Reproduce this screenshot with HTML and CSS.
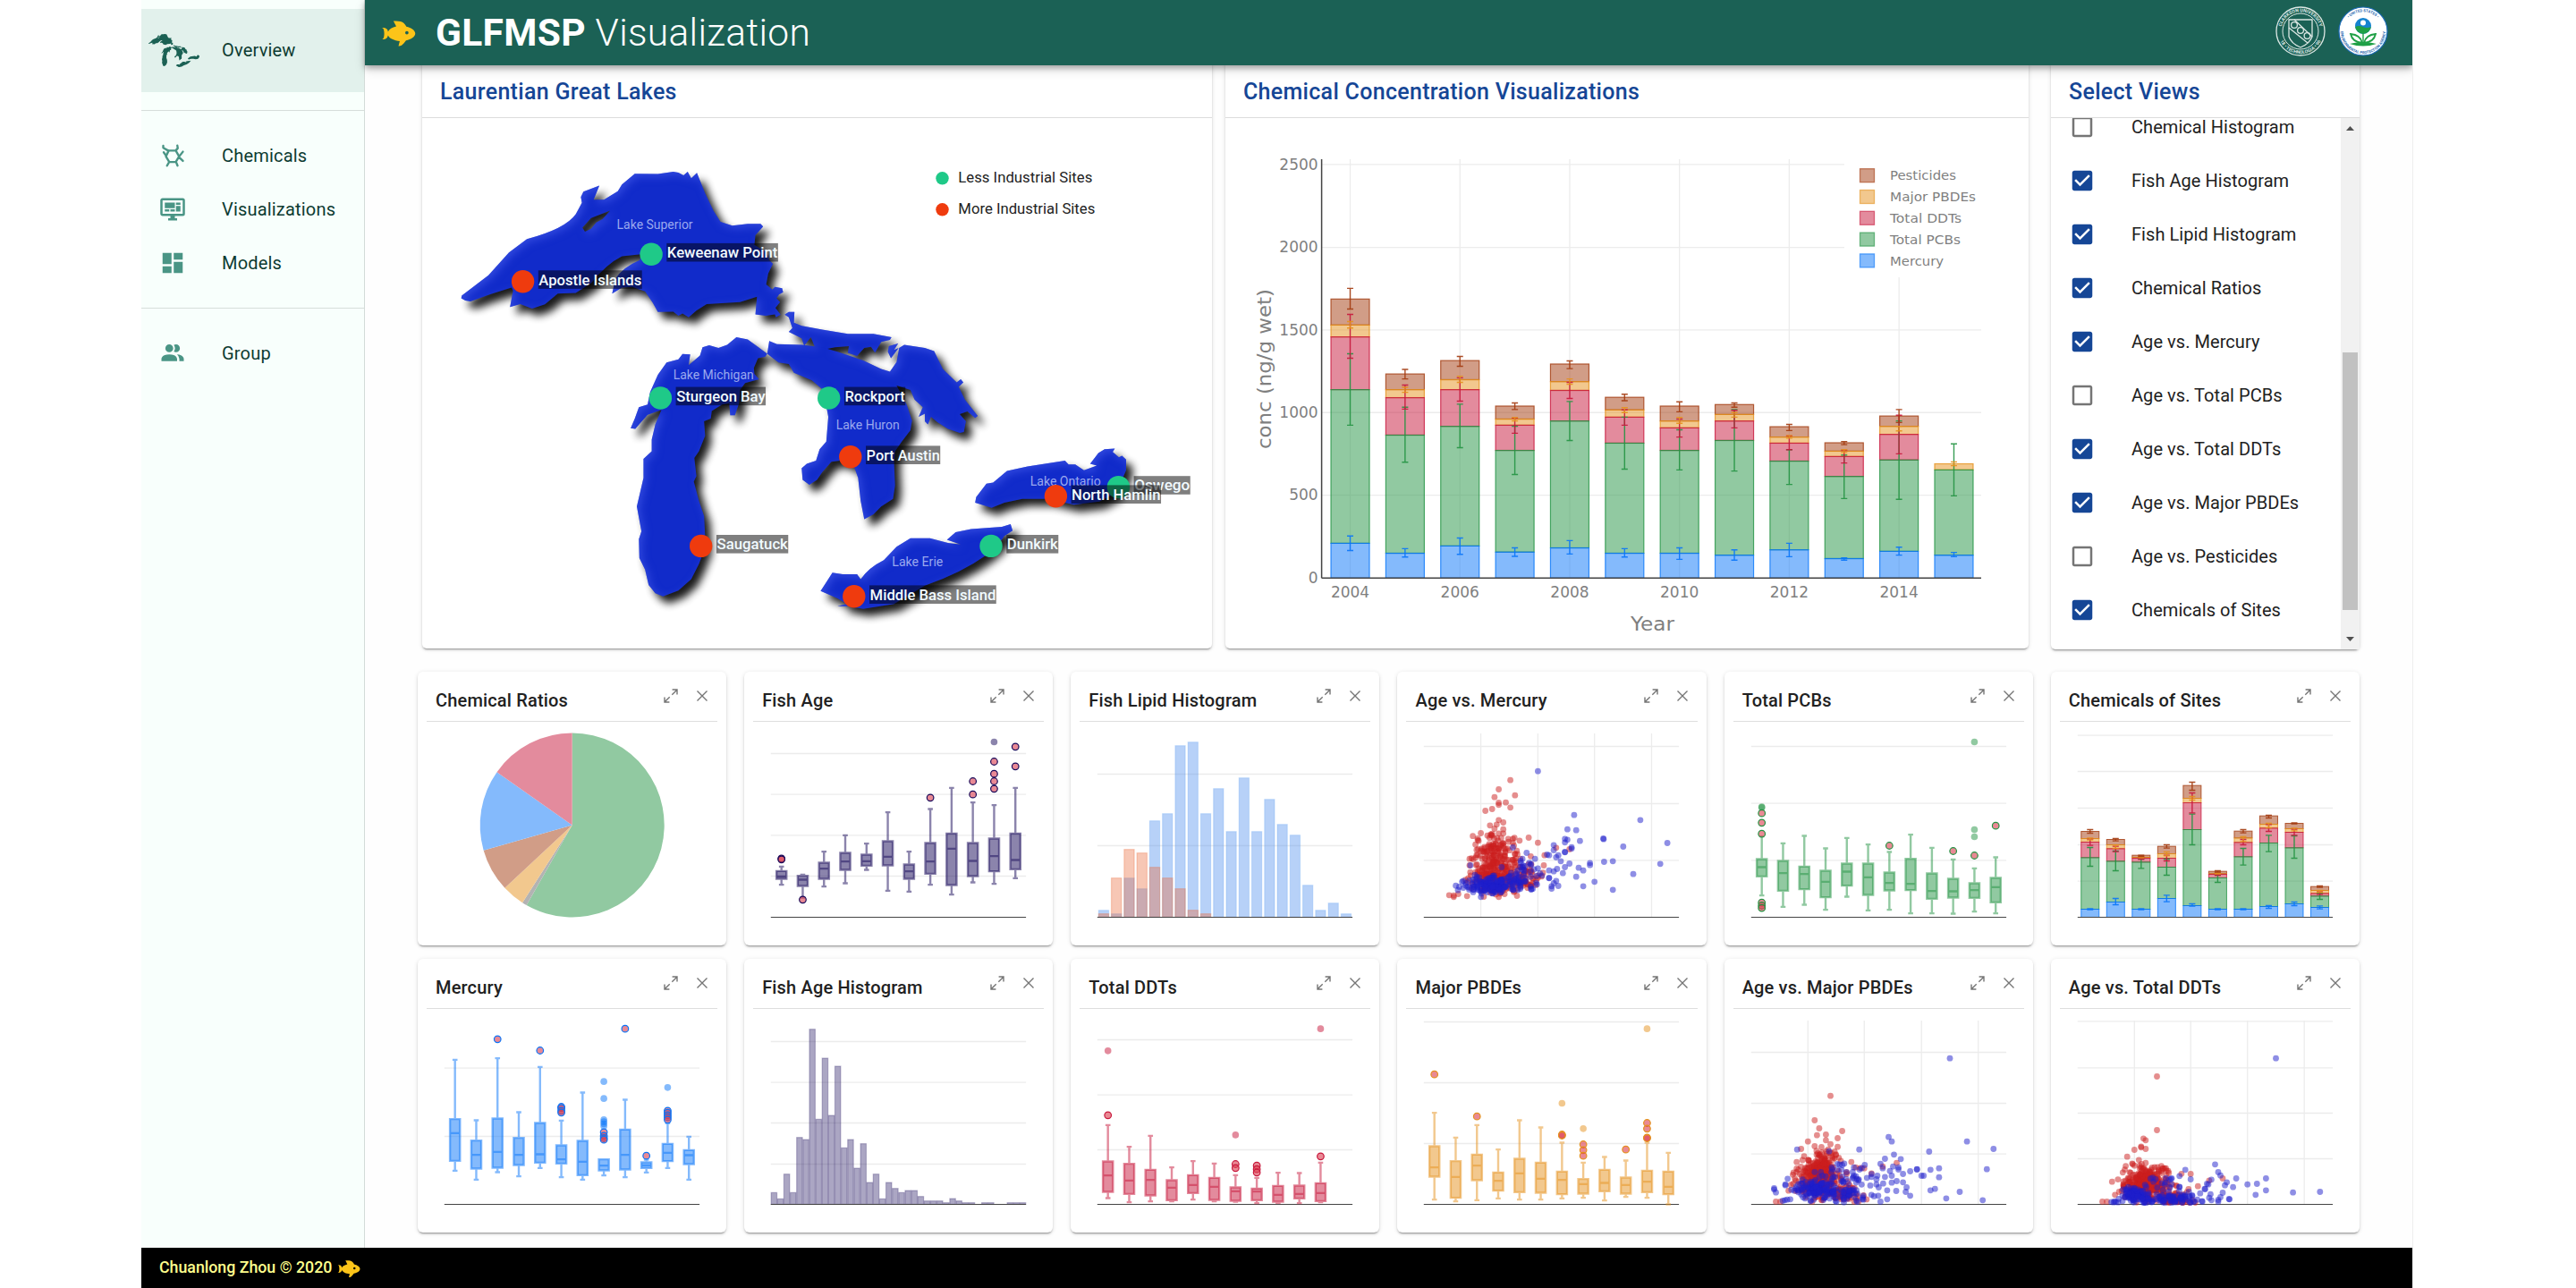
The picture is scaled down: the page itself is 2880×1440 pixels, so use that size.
FILE: index.html
```html
<!DOCTYPE html>
<html lang="en">
<head>
<meta charset="utf-8">
<title>GLFMSP Visualization</title>
<link rel="stylesheet" href="styles.css">
</head>
<body>
<svg class="defs" width="0" height="0" aria-hidden="true">
  <defs>
    <symbol id="fish" viewBox="0 0 24 24"><path d="M12,20L12.76,17C9.5,16.79 6.59,15.4 5.75,13.58C5.66,14.06 5.53,14.5 5.33,14.83C4.67,16 3.33,16 2,16C3.1,16 3.5,14.43 3.5,12.5C3.5,10.57 3.1,9 2,9C3.33,9 4.67,9 5.33,10.17C5.53,10.5 5.66,10.94 5.75,11.42C6.4,10 8.32,8.85 10.66,8.32L9,5C11,5 13,5 14.33,5.67C15.46,6.23 16.11,7.27 16.69,8.38C19.61,9.08 22,10.66 22,12.5C22,14.38 19.5,16 16.5,16.66C15.67,17.76 14.86,18.78 14.17,19.33C13.33,20 12.67,20 12,20M17,11A1,1 0 0,0 16,12A1,1 0 0,0 17,13A1,1 0 0,0 18,12A1,1 0 0,0 17,11Z"/></symbol>
    <symbol id="checked" viewBox="0 0 24 24"><path d="M19 3H5c-1.11 0-2 .9-2 2v14c0 1.1.89 2 2 2h14c1.11 0 2-.9 2-2V5c0-1.1-.89-2-2-2zm-9 14l-5-5 1.41-1.41L10 14.17l7.59-7.59L19 8l-9 9z"/></symbol>
    <symbol id="unchecked" viewBox="0 0 24 24"><path d="M19 5v14H5V5h14m0-2H5c-1.1 0-2 .9-2 2v14c0 1.1.9 2 2 2h14c1.1 0 2-.9 2-2V5c0-1.1-.9-2-2-2z"/></symbol>
    <symbol id="expand" viewBox="0 0 16 16"><path d="M9.3 6.7 14.6 1.4M9.6 1h5.4v5.4M6.7 9.3 1.4 14.6M1 9.6V15h5.4" fill="none" stroke="#757575" stroke-width="1.4"/></symbol>
    <symbol id="close" viewBox="0 0 16 16"><path d="M2.5 2.5l11 11M13.5 2.5l-11 11" fill="none" stroke="#757575" stroke-width="1.4"/></symbol>
    <g id="lakes">
      <path fill-rule="evenodd" d="M98,633L97,640 105,646 115,648Q155,628 195,612L198,620 192,663 212,655 235,667 260,656 285,628 320,626 350,600Q380,550 410,530L447,525 445,540Q410,560 397,590L391,628 410,612 430,610 455,622 470,652 480,676 510,675 520,686 528,680 540,690 555,672 575,655 640,650 673,636 670,682 690,686 708,682 710,690 719,683 709,665 718,650 711,640 716,630 724,624 722,614 708,610 703,617 691,604 695,575 704,550 697,540 692,520 668,500 670,475 685,452 680,445 655,445 625,450 602,440 588,410 572,365 556,312 545,326 538,309 530,318 520,311 510,309 480,315 435,314 410,342 402,360 375,382 355,382 366,345 335,361 330,375 332,390 320,420Q300,458 225,485L190,520 150,580ZM387,411L350,430 333,455 338,466 350,458 360,442 372,433Z"/>
      <path d="M727,683L735,676 746,676 745,704 760,712 800,722 850,733 900,733 935,742 932,749 915,754 903,782 895,767 882,770 868,791 850,783 852,765 825,768 800,775 785,765 778,742 765,764 760,745 735,728 742,718 735,690Z"/>
      <path d="M693,785L697,752 712,760 760,762 800,768 830,780 880,803 915,825 932,832 945,807 950,770 960,762 1000,770 1018,778 1035,825 1062,860 1070,852 1075,860 1066,872 1078,905 1103,948 1098,953 1083,936 1068,943 1080,962 1076,990 1068,992 1045,982 1025,965 1012,950 1006,970 1000,962 1000,942 988,950 996,925 980,905 972,880 945,868 965,920 975,960 972,985 955,1015 942,1040 940,1070 942,1130 938,1165 915,1185 900,1205 882,1218 875,1170 870,1110 862,1080 835,1065 818,1068 800,1095 790,1115 775,1128 762,1115 760,1085 770,1073 788,1065 795,1035 808,1015 812,950 805,900 802,880 780,855 745,835 735,812 715,808Z"/>
      <path d="M930,765L948,758 940,775 949,770 934,797 928,780Z"/>
      <path d="M633,742L655,748 676,768 693,785 689,793 675,797 667,822 668,838 677,852 650,862 640,880 638,915 630,946 621,946 619,915 605,918 585,935 583,955 570,962 572,1000 560,1040 551,1058 555,1105 550,1120 560,1170 570,1210 573,1290 560,1335 545,1375 520,1405 490,1420 475,1412 462,1390 455,1350 444,1320 443,1270 448,1250 439,1185 452,1110 452,1060 468,1040 468,1010 475,970 487,932 460,945 445,968 436,982 427,980 435,955 443,925 460,918 465,885 480,840 497,808 520,800 528,786 543,787 540,815 562,790 567,768 580,763 598,770 615,762Z"/>
      <path d="M797,1406L820,1358 840,1362 868,1362 875,1375Q890,1345 920,1325L945,1290 972,1268 1010,1268 1045,1280 1070,1284 1043,1272 1060,1252 1090,1244 1150,1238 1167,1231 1171,1248 1155,1262 1140,1290 1120,1312Q1070,1360 1000,1392L940,1440 880,1453 850,1446 830,1446 848,1440 830,1425Z"/>
      <path d="M1098,1175L1100,1160 1120,1125 1133,1122 1160,1092 1200,1080 1273,1065 1280,1075 1293,1075 1310,1090 1335,1078 1322,1073 1338,1045 1350,1035 1370,1033 1366,1042 1378,1056 1384,1052 1392,1062 1392,1090 1385,1112 1370,1150 1340,1172 1290,1180 1240,1165 1190,1165 1155,1175 1130,1188Z"/>
    </g>
    <filter id="relief" x="-5%" y="-5%" width="115%" height="115%" color-interpolation-filters="sRGB">
      <feGaussianBlur in="SourceAlpha" stdDeviation="5" result="soft"/>
      <feOffset in="soft" dx="7" dy="8" result="shift"/>
      <feComponentTransfer in="shift" result="shadow"><feFuncA type="linear" slope="0.9"/></feComponentTransfer>
      <feOffset in="soft" dx="3" dy="3" result="inner"/>
      <feFlood flood-color="#4d62f0" flood-opacity="0.55"/>
      <feComposite operator="out" in2="inner"/>
      <feComposite operator="in" in2="SourceAlpha" result="light"/>
      <feMerge><feMergeNode in="shadow"/><feMergeNode in="SourceGraphic"/><feMergeNode in="light"/></feMerge>
    </filter>
  </defs>
</svg>

<div class="page">
  <div class="body">
    <nav class="sidebar">
      <a class="nav-item nav-overview">
        <svg class="nav-logo" viewBox="97 308 1296 1146" preserveAspectRatio="none"><use href="#lakes"/></svg>
        <span>Overview</span>
      </a>
      <div class="nav-group nav-main">
        <a class="nav-item"><svg class="nav-icon" viewBox="0 0 24 24"><path d="M8.5 7.5h6.3l3 5.2-3 5H9l-3-5zM8 7.5 3.6 5V3.2M14.8 7.5l1.8-2.2-.4-2.4M18 12.5l3.2-4M6.3 12.3 4 9M9 17.5 7 21M15 17.5l1.4 3.5M17.8 13.5l3.4 3.2" fill="none" stroke="#4a9585" stroke-width="1.9" stroke-linecap="round" stroke-linejoin="round"/></svg><span>Chemicals</span></a>
        <a class="nav-item"><svg class="nav-icon" viewBox="0 0 24 24"><path d="M21,16V4H3V16H21M21,2A2,2 0 0,1 23,4V16A2,2 0 0,1 21,18H14V20H16V22H8V20H10V18H3C1.89,18 1,17.1 1,16V4C1,2.89 1.89,2 3,2H21M5,6H14V11H5V6M15,6H19V8H15V6M19,9V14H15V9H19M5,12H9V14H5V12M10,12H14V14H10V12Z"/></svg><span>Visualizations</span></a>
        <a class="nav-item"><svg class="nav-icon" viewBox="0 0 24 24"><path d="M3 13h8V3H3v10zm0 8h8v-6H3v6zm10 0h8V11h-8v10zm0-18v6h8V3h-8z"/></svg><span>Models</span></a>
      </div>
      <div class="nav-group nav-more">
        <a class="nav-item"><svg class="nav-icon" viewBox="0 0 24 24"><path d="M16 17V19H2V17S2 13 9 13 16 17 16 17M12.5 7.5A3.5 3.5 0 1 0 9 11A3.5 3.5 0 0 0 12.5 7.5M15.94 13A5.32 5.32 0 0 1 18 17V19H22V17S22 13.37 15.94 13M15 4A3.39 3.39 0 0 0 13.07 4.59A5 5 0 0 1 13.07 10.41A3.39 3.39 0 0 0 15 11A3.5 3.5 0 0 0 15 4Z"/></svg><span>Group</span></a>
      </div>
    </nav>

    <div class="main">
      <header class="appbar">
        <svg class="appbar-fish"><use href="#fish"/></svg>
        <h1 class="appbar-title"><b>GLFMSP</b> Visualization</h1>
        <svg class="seal" viewBox="0 0 56 56">
          <defs><path id="ring-top" d="M6.2 28a21.8 21.8 0 0 1 43.6 0"/><path id="ring-bottom" d="M2.8 28a25.2 25.2 0 0 0 50.4 0"/></defs>
          <g fill="none" stroke="#dbe7e4" stroke-width="1.3">
            <circle cx="28" cy="28" r="27"/><circle cx="28" cy="28" r="20" stroke-width="1"/>
            <path d="M15 15h26v19q-3 8-13 12-10-4-13-12z"/><path d="M21 15l20 19M15 24l21 17"/>
            <circle cx="21" cy="21" r="3.4"/><circle cx="28" cy="27" r="3.4"/><circle cx="35.5" cy="33" r="3.4"/>
          </g>
          <text class="seal-text seal-light"><textPath href="#ring-top" startOffset="50%">CLARKSON UNIVERSITY</textPath></text>
          <text class="seal-text seal-light"><textPath href="#ring-bottom" startOffset="50%">18 • TECHNOLOGIA • 96</textPath></text>
        </svg>
        <svg class="seal" viewBox="0 0 56 56">
          <circle cx="28" cy="28" r="27" fill="#fff" stroke="#1c6bb8" stroke-width="1.2"/>
          <circle cx="28" cy="22" r="9" fill="#1583cf"/><circle cx="28" cy="18.5" r="3" fill="#fff"/>
          <path d="M19.1 23q4-1.8 8.5 0t9.3 0a9 9 0 0 1-17.8 0z" fill="#1fa046"/>
          <path d="M27.3 30h1.4v13h-1.4z" fill="#1fa046"/>
          <path d="M27 41q-2-9-13-10 2 9 13 10zM29 41q2-9 13-10-2 9-13 10z" fill="#fff" stroke="#1fa046" stroke-width="1.8"/>
          <path d="M13 42q15-4 30 0-15 5-30 0z" fill="#1fa046"/>
          <text class="seal-text seal-blue"><textPath href="#ring-top" startOffset="50%">• UNITED STATES •</textPath></text>
          <text class="seal-text seal-blue"><textPath href="#ring-bottom" startOffset="50%">ENVIRONMENTAL PROTECTION AGENCY</textPath></text>
        </svg>
      </header>

      <div class="content">
        <div class="panels">
          <section class="panel">
            <h2 class="panel-head">Laurentian Great Lakes</h2>
            <svg class="panel-chart" id="map"></svg>
          </section>
          <section class="panel">
            <h2 class="panel-head">Chemical Concentration Visualizations</h2>
            <svg class="panel-chart" id="concentration"></svg>
          </section>
          <section class="panel panel-views">
            <h2 class="panel-head">Select Views</h2>
            <div class="views">
              <ul class="views-list">
                <li><svg class="box"><use href="#unchecked"/></svg>Chemical Histogram</li>
                <li><svg class="box on"><use href="#checked"/></svg>Fish Age Histogram</li>
                <li><svg class="box on"><use href="#checked"/></svg>Fish Lipid Histogram</li>
                <li><svg class="box on"><use href="#checked"/></svg>Chemical Ratios</li>
                <li><svg class="box on"><use href="#checked"/></svg>Age vs. Mercury</li>
                <li><svg class="box"><use href="#unchecked"/></svg>Age vs. Total PCBs</li>
                <li><svg class="box on"><use href="#checked"/></svg>Age vs. Total DDTs</li>
                <li><svg class="box on"><use href="#checked"/></svg>Age vs. Major PBDEs</li>
                <li><svg class="box"><use href="#unchecked"/></svg>Age vs. Pesticides</li>
                <li><svg class="box on"><use href="#checked"/></svg>Chemicals of Sites</li>
              </ul>
              <div class="scrollbar">
                <svg class="scroll-arrow" viewBox="0 0 9 5"><path d="M0 5 4.5 0 9 5z"/></svg>
                <div class="scroll-thumb"></div>
                <svg class="scroll-arrow" viewBox="0 0 9 5"><path d="M0 0 4.5 5 9 0z"/></svg>
              </div>
            </div>
          </section>
        </div>
        <div class="cards" id="cards"></div>
      </div>
    </div>
  </div>
  <footer class="footer"><span>Chuanlong Zhou © 2020</span><svg class="footer-fish"><use href="#fish"/></svg></footer>
</div>
<script src="charts.js"></script>
</body>
</html>
```
FILE: styles.css
```css
* { box-sizing: border-box; }
body {
  margin: 0;
  background: #fff;
  font-family: Roboto, "Liberation Sans", sans-serif;
  color: #212121;
}
.defs { position: absolute; }
.page {
  width: 2540px;
  height: 1440px;
  margin-left: 158px;
  display: flex;
  flex-direction: column;
  overflow: hidden;
  border-right: 1px solid #eee;
}
.body { flex: 1; display: flex; min-height: 0; }

.sidebar {
  width: 250px;
  padding-top: 10px;
  background: #f8fffc;
  border-right: 1px solid #d3dbd8;
}
.nav-item {
  display: flex;
  align-items: center;
  height: 60px;
  padding-left: 20px;
  font-size: 20px;
  letter-spacing: 0.00938em;
  color: #0d3b31;
}
.nav-overview { height: 93px; padding: 0 0 1px 8px; background: #e2f1ec; }
.nav-logo { width: 57px; height: 37px; margin-right: 25px; fill: #1b6154; }
.nav-icon { width: 30px; height: 30px; margin-right: 40px; fill: #4a9585; }
.nav-group { border-top: 1px solid #d7dedb; }
.nav-main { margin-top: 20px; height: 221px; padding-top: 20px; }
.nav-more { padding-top: 20px; }

.main { flex: 1; display: flex; flex-direction: column; min-width: 0; }
.appbar {
  height: 73px;
  flex: none;
  display: flex;
  align-items: center;
  padding: 0 27px 3px 15px;
  background: #1b6155;
  box-shadow: 0 3px 6px rgba(0,0,0,.28), 0 5px 12px rgba(0,0,0,.14);
  z-index: 2;
  color: #fff;
}
.appbar-fish { width: 45px; height: 45px; margin-top: 3px; fill: #fcc419; }
.appbar-title {
  flex: 1;
  margin: 0 0 0 19px;
  padding-top: 4px;
  font-size: 42.5px;
  line-height: 1;
  font-weight: 300;
  letter-spacing: 0.00735em;
}
.appbar-title b { font-weight: 700; }
.seal { width: 56px; height: 56px; margin-left: 14px; }
.seal-text { font-size: 5.2px; font-weight: 700; text-anchor: middle; }
.seal-light { fill: #dbe7e4; }
.seal-blue { fill: #2868b0; font-size: 4.2px; }

.content { padding: 0 59px; background: #fefefe; flex: 1; min-height: 0; }
.panels {
  display: grid;
  grid-template-columns: 883px 898px 345px;
  column-gap: 15px;
  margin-top: -2px;
  padding-left: 5px;
  height: 655px;
}
.panel {
  display: flex;
  flex-direction: column;
  height: 654px;
  min-width: 0;
  background: #fff;
  border-radius: 0 0 5px 5px;
  box-shadow: 0 3px 1px -2px rgba(0,0,0,.2), 0 2px 2px rgba(0,0,0,.14), 0 1px 5px rgba(0,0,0,.12);
}
.panel-views { margin-left: 10px; width: 345px; height: 655px; }
.panel-head {
  flex: none;
  height: 61px;
  margin: 0;
  padding-left: 20px;
  border-bottom: 1px solid #dcdcdc;
  font-size: 25px;
  line-height: 63px;
  font-weight: 500;
  letter-spacing: 0.3px;
  color: #154696;
}
.panel-chart { width: 100%; height: 593px; display: block; }

.views { flex: 1; display: flex; overflow: hidden; min-height: 0; }
.views-list { flex: 1; list-style: none; margin: -20px 0 0; padding: 0 0 0 20px; }
.views-list li {
  display: flex;
  align-items: center;
  height: 60px;
  font-size: 20px;
  letter-spacing: 0.05px;
}
.box { width: 30px; height: 30px; margin-right: 40px; fill: #757575; }
.box.on { fill: #154696; }
.scrollbar {
  width: 21px;
  display: flex;
  flex-direction: column;
  align-items: center;
  padding: 9px 0;
  background: #f1f1f1;
}
.scroll-arrow { width: 9px; height: 5px; flex: none; fill: #505050; }
.scroll-thumb { width: 17px; height: 288px; margin: 248px 0 auto; background: #c1c1c1; }

.cards {
  display: grid;
  grid-template-columns: repeat(6, 1fr);
  gap: 15px 20px;
  margin-top: 25px;
}
.card {
  height: 306px;
  min-width: 0;
  background: #fff;
  border-radius: 6px;
  box-shadow: 0 3px 1px -2px rgba(0,0,0,.2), 0 2px 2px rgba(0,0,0,.14), 0 1px 5px rgba(0,0,0,.12);
}
.card-head {
  display: flex;
  height: 56px;
  margin: 0 10px;
  padding: 20px 9px 0 10px;
  border-bottom: 1px solid #dedede;
}
.card-head h3 {
  flex: 1;
  margin: 0;
  font-size: 20px;
  line-height: 24px;
  font-weight: 500;
  letter-spacing: 0.0085em;
}
.card-icon { width: 16px; height: 16px; margin: -1px 0 0 19px; }
.card-chart { display: block; width: 345px; height: 250px; }

.grid-line { stroke: #ececec; stroke-width: 1.3; }
.axis-line { stroke: #444; stroke-width: 1; }
.axis-main { stroke-width: 1.5; }
.tick { font: 17px "DejaVu Sans", sans-serif; fill: #7f7f7f; }
.axis-title { font: 22px "DejaVu Sans", sans-serif; fill: #7f7f7f; }
.legend { font: 14.5px "DejaVu Sans", sans-serif; fill: #7f7f7f; }
.lakes { fill: #112bca; }
.lake-name { font-size: 14.5px; fill: #9aa8ee; }
.site-name { font-size: 17px; font-weight: 500; fill: #f2fbff; }
.map-legend { font-size: 16.5px; fill: #222; }

.footer {
  flex: none;
  height: 45px;
  display: flex;
  align-items: center;
  padding: 0 0 2px 20px;
  background: #000;
  color: #ffff8d;
  font-size: 17.75px;
  font-weight: 500;
}
.footer-fish { width: 30px; height: 30px; margin: 3px 0 0 4px; fill: #fcc419; }
```
FILE: charts.js
```js
const C = {
  mercury: '9,117,249', pcbs: '35,147,67', ddts: '200,23,60',
  pbdes: '229,145,29', pesticides: '163,59,15', fish: '23,9,89'
};
const line = (x1, y1, x2, y2, attrs) => `<line x1="${x1}" y1="${y1}" x2="${x2}" y2="${y2}" ${attrs}/>`;
const rect = (x, y, w, h, attrs) => `<rect x="${x}" y="${y}" width="${w}" height="${h}" ${attrs}/>`;
const dot = (x, y, r, attrs) => `<circle cx="${x}" cy="${y}" r="${r}" ${attrs}/>`;
const text = (x, y, cls, str, len, extra = '') =>
  `<text x="${x}" y="${y}" class="${cls}" ${len ? `textLength="${len}" lengthAdjust="spacingAndGlyphs"` : ''} ${extra}>${str}</text>`;

/* Small charts: plot is 285px wide, baseline at 218.5; levels come in thirds of a pixel. */
const W = 285.3, X0 = 29.8, Y0 = 218.5;
const frame = (base, rows, cols = []) => {
  const y = v => Y0 - (base - v) / 3;
  return rows.map(v => line(X0, y(v), X0 + W, y(v), 'class="grid-line"')).join('') +
    cols.map(x => line(X0 + x, 13, X0 + x, Y0, 'class="grid-line"')).join('');
};
const axis = () => line(X0, Y0, X0 + W, Y0, 'class="axis-line"');

function boxes(color, base, rows, data) {
  const y = v => Y0 - (base - v) / 3;
  let s = frame(base, rows) + axis();
  const c = `rgb(${color})`;
  data.forEach(([top, q3, med, q1, low, out = [], far = []], i) => {
    const x = X0 + (i + .5) * W / 12;
    const p = `M${x - 5.6} ${y(q3)}h11.2V${y(q1)}h-11.2zM${x - 5.6} ${y(med)}h11.2M${x} ${y(q3)}V${y(top)}M${x} ${y(q1)}V${y(low)}M${x - 2.8} ${y(top)}h5.6M${x - 2.8} ${y(low)}h5.6`;
    s += `<path d="${p}" fill="${c}" fill-opacity=".5" stroke="${c}" stroke-opacity=".5" stroke-width="2.4"/>`;
    far.forEach(v => { s += dot(x, y(v), 3.8, `fill="${c}" fill-opacity=".5"`); });
    out.forEach(v => { s += dot(x, y(v), 3.8, `fill="rgb(219,64,82)" fill-opacity=".62" stroke="${c}" stroke-width="1.2"`); });
  });
  return s;
}

function histogram(base, rows, series, count, inset) {
  const y = v => Y0 - (base - v) / 3, step = W / count;
  return frame(base, rows) + series.map(([fill, stroke, tops]) => tops.map((v, i) => v >= base ? '' :
    rect(X0 + i * step + inset, y(v) + .5, step - 2 * inset, (base - v) / 3 - .5, `fill="${fill}" stroke="${stroke}" stroke-width="1.2"`)
  ).join('')).join('') + axis();
}

/* Deterministic jitter for the dense part of the scatter plots. */
function random(seed) {
  return () => {
    seed = (seed + 0x6D2B79F5) | 0;
    let t = Math.imul(seed ^ (seed >>> 15), 1 | seed);
    t = (t + Math.imul(t ^ (t >>> 7), 61 | t)) ^ t;
    return ((t ^ (t >>> 14)) >>> 0) / 4294967296;
  };
}
function scatter(base, rows, cols, left, scale, red, blue, clouds) {
  const rnd = random(7);
  const gauss = () => Math.sqrt(-2 * Math.log(rnd() + 1e-9)) * Math.cos(6.2832 * rnd());
  const pts = { red: [...red], blue: [...blue] };
  clouds.forEach(([key, n, cx, sx, cy, sy, top, bottom]) => {
    for (let i = 0; i < n; i++) {
      const yy = cy + gauss() * sy;
      if (yy < top || yy > bottom) continue;
      pts[key].push([cx + gauss() * sx, yy]);
    }
  });
  const draw = (list, fill) => list.map(([x, v]) =>
    dot((X0 + (x - left) / scale).toFixed(1), (Y0 - (base - v) / 3).toFixed(1), 3.4, `fill="${fill}" fill-opacity=".5"`)).join('');
  return frame(base, rows, cols.map(x => (x - left) / scale)) + axis() + draw(pts.red, '#cc1e1e') + draw(pts.blue, '#1e1ecc');
}

/* Stacked bars: each bar lists the upper edge of every layer, top layer first. */
const LAYERS = ['pesticides', 'pbdes', 'ddts', 'pcbs', 'mercury'];
function stack(x, w, edges, base, errs, y, cap, sw) {
  let s = '';
  LAYERS.forEach((k, i) => {
    if (edges[i] == null) return;
    let below = base;
    for (let j = i + 1; j < 5; j++) if (edges[j] != null) { below = edges[j]; break; }
    s += rect(x - w / 2, y(edges[i]), w, y(below) - y(edges[i]), `fill="rgb(${C[k]})" fill-opacity=".5" stroke="rgb(${C[k]})" stroke-opacity=".8" stroke-width="${sw}"`);
  });
  [4, 3, 2, 1, 0].forEach(i => {
    const e = errs[i];
    if (!e) return;
    s += `<path d="M${x} ${y(e[0])}V${y(e[1])}M${x - cap} ${y(e[0])}h${2 * cap}M${x - cap} ${y(e[1])}h${2 * cap}" stroke="rgb(${C[LAYERS[i]]})" stroke-opacity=".9" stroke-width="1.4" fill="none"/>`;
  });
  return s;
}

function pie() {
  const cx = 172.7, cy = 115.5, r = 103;
  const cuts = [[0, 209.7, '#91c9a1'], [209.7, 212.7, '#b3b3b3'], [212.7, 227, '#f2c88e'], [227, 254.1, '#d19d87'], [254.1, 305.2, '#84bafc'], [305.2, 360, '#e38b9d']];
  const at = a => `${cx + r * Math.sin(a * Math.PI / 180)} ${cy - r * Math.cos(a * Math.PI / 180)}`;
  return cuts.map(([a, b, c]) => `<path d="M${cx} ${cy}L${at(a)}A${r} ${r} 0 ${b - a > 180 ? 1 : 0} 1 ${at(b)}z" fill="${c}"/>`).join('');
}

function sites() {
  const y = v => Y0 - (856 - v) / 3;
  const bars = [
    [[568,592,604,656,829], [[562,574],[590,597],[594,615],[622,685],[827,831]]],
    [[595,613,626,668,805], [[592,600],[614,625],[618,636],[634,700],[793,814]]],
    [[648,655,658,671,829], [[648,652],[653,657],[655,661],[661,692],[827,831]]],
    [[618,643,658,688,793], [[613,624],[637,650],[648,667],[661,715],[782,804]]],
    [[414,457,472,562,817], [[403,430],[451,463],[439,506],[510,613],[811,819]]],
    [[702,710,712,724,829], [[700,705],[707,711],[709,715],[715,739],[827,831]]],
    [[567,590,605,653,829], [[562,573],[586,602],[595,613],[625,681],[827,831]]],
    [[516,544,557,607,820], [[514,523],[541,556],[545,568],[581,636],[817,826]]],
    [[541,559,571,623,811], [[539,543],[557,566],[561,581],[583,658],[805,817]]],
    [[753,766,776,785,823], [[751,756],[766,772],[770,779],[776,796],[818,828]]]
  ];
  return frame(856, [246, 367, 490, 613, 735]) +
    bars.map(([e, r], i) => stack(X0 + (i + .5) * W / 10 - .3, 20, e, 856, r, y, 3.5, 1)).join('') + axis();
}

const cards = [
  ['Chemical Ratios', pie()],
  ['Fish Age', boxes(C.fish, 856, [307,444,581,718], [
    [686,701,719,727,747,[659,662]], [713,717,730,751,790,[797]], [636,673,693,727,753], [581,640,669,697,742],
    [609,646,668,683,697], [504,601,653,682,767], [636,679,702,727,770], [493,607,669,710,747,[455]],
    [422,575,626,748,780], [471,607,667,718,739,[400,444]], [480,592,651,702,744,[334,375,400,425],[268]], [422,575,664,695,725,[284,350]]])],
  ['Fish Lipid Histogram', histogram(856, [376,616], [
    ['rgba(65,135,236,.38)', 'rgba(65,145,240,.2)', [831,843,723,759,531,507,279,267,507,423,567,387,567,459,543,579,747,831,807,843]],
    ['rgba(235,108,60,.38)', 'rgba(235,108,60,.3)', [843,723,627,639,687,723,759,831,843]]], 20, 1.5)],
  ['Age vs. Mercury', scatter(856, [283,475,665], [1000,1137,1273,1410], 863, 2.148,
    [[1071,396],[1043,427],[1082,447],[1033,453],[1043,472],[1043,479],[1060,471],[1071,488],[1027,493],[1011,499],[1043,530],[1054,538],[1038,545],[1022,548],[1054,561],[1033,559],[1000,574],[1016,582],[1027,582],[1043,575],[1049,590],[1054,575],[1077,593],[1077,606],[1093,599],[1115,589],[1137,606],[1181,623],[1213,628],[1153,648],[924,782],[935,783],[935,788],[946,778],[967,785],[1043,788],[973,660],[973,682]],
    [[1137,366],[1224,513],[1383,530],[1208,561],[1229,564],[1294,592],[1295,594],[1448,607],[1342,619],[1238,600],[1202,593],[1208,596],[1202,605],[1175,614],[1218,621],[1218,626],[1175,631],[1202,638],[1202,637],[1077,622],[1110,640],[1159,646],[1164,648],[1186,648],[1181,655],[1192,668],[1262,674],[1262,681],[1296,670],[1317,668],[1431,677],[1366,711],[1213,676],[1202,688],[1235,690],[1246,699],[1197,708],[1183,694],[1175,702],[1164,699],[1229,720],[1164,724],[1164,725],[1181,734],[1175,742],[1186,751],[1170,752],[1170,760],[1246,752],[1273,737],[1317,764],[940,750],[955,737],[958,734],[945,765],[975,682],[1000,788],[1137,692],[1142,709],[1147,716],[1135,746],[1120,753],[1130,660],[1120,720],[1100,660]],
    [['red',110,1032,26,640,40,575,720],['red',230,1040,34,715,38,600,788],['red',40,1110,14,720,25,670,765],['blue',130,1015,26,748,15,700,778],['blue',50,1075,26,745,18,675,768],['blue',22,1105,16,705,22,655,750]])],
  ['Total PCBs', boxes(C.pcbs, 856, [283,474,665], [
    [585,661,688,719,783,[507,539,576,807,817,825],[486,488]], [608,667,708,767,821], [583,686,711,762,814], [625,700,737,789,831],
    [590,676,703,750,787], [612,676,722,781,833], [637,706,741,766,831,[616]], [579,660,744,765,843],
    [623,709,768,794,843], [662,727,769,790,844,[634]], [692,742,765,791,837,[649],[562,586,268]], [655,724,755,806,843,[549]]])],
  ['Chemicals of Sites', sites()],
  ['Mercury', boxes(C.mercury, 862, [405,634], [
    [377,576,623,716,749], [580,648,696,742,779], [372,574,686,739,754,[308]], [553,639,696,730,768],
    [401,589,694,722,740,[346]], [581,664,711,725,771,[535,539,548,554]], [487,649,719,764,779], [711,711,732,748,765,[620,632,640,645],[450,507,578,585,592,600]],
    [511,611,696,745,771,[273]], [712,721,731,740,755,[699]], [590,659,689,717,740,[548,555,563,570,578],[470]], [635,680,697,727,779]])],
  ['Fish Age Histogram', histogram(862, [316,453,589,727], [
    ['rgba(23,9,89,.36)', 'rgba(23,9,89,.25)', [821,842,759,821,636,643,273,575,370,562,397,671,643,739,657,787,759,842,787,807,821,814,814,834,849,849,849,855,841,849,855,855,862,855,855,862,862,855,855,855]]], 40, .35)],
  ['Total DDTs', boxes(C.ddts, 862, [310,495,679], [
    [596,718,765,820,841,[563],[347]], [669,726,782,827,855], [632,746,780,832,852], [738,781,806,848,852],
    [717,764,797,824,846], [725,773,803,847,852], [764,805,818,850,853,[727,740],[629]], [773,809,819,848,858,[732,744,755]],
    [756,800,830,853,857], [757,799,827,842,858], [722,791,824,851,855,[701],[273]]])],
  ['Major PBDEs', boxes(C.pbdes, 862, [250,454,658], [
    [555,667,738,769,846,[426]], [638,717,770,840,852], [596,695,732,781,848,[567]], [678,755,783,816,842],
    [580,709,758,821,846], [604,722,776,823,846], [655,752,780,828,842,[628,631],[523]], [722,777,794,826,840,[661,680,699],[608]],
    [703,746,790,818,849], [715,772,797,826,837,[678]], [655,749,786,821,840,[589,608,638,640],[273]], [689,752,803,828,862]])],
  ['Age vs. Major PBDEs', scatter(862, [352,523,693], [201,326,453,579], 75, 1.985,
    [[251,498],[216,580],[226,607],[277,616],[221,630],[241,628],[241,647],[267,640],[201,651],[251,660],[267,669],[216,667],[231,670],[186,676],[246,678],[176,720],[176,742],[367,735],[398,723],[342,758],[130,853],[140,853],[158,816],[326,741],[317,740],[307,738],[250,690],[287,760]],
    [[516,372],[380,636],[387,651],[554,651],[613,676],[470,685],[315,678],[177,678],[248,684],[392,695],[372,709],[407,710],[598,744],[362,726],[390,735],[402,745],[402,738],[383,750],[443,744],[443,745],[428,751],[473,746],[492,741],[492,771],[453,766],[458,766],[412,760],[387,766],[372,770],[355,766],[353,778],[398,784],[387,789],[412,788],[368,792],[367,741],[420,805],[473,815],[483,810],[538,820],[418,820],[377,815],[397,817],[428,833],[508,842],[589,848],[377,845],[362,853],[357,833],[342,830],[126,808],[126,812],[130,822],[156,776],[151,795],[151,798],[145,850],[150,848],[155,846],[162,845],[327,730],[332,773],[342,770],[277,730],[303,738],[353,795],[358,805]],
    [['red',210,232,20,750,35,680,855],['red',140,222,26,785,28,700,855],['red',50,290,18,830,14,790,855],['blue',85,208,17,808,13,770,850],['blue',35,260,32,775,30,710,855],['blue',75,262,34,832,13,795,856],['blue',24,315,14,800,30,740,855]])],
  ['Age vs. Total DDTs', scatter(862, [248,404,556,709], [926,1051,1177,1303], 800, 1.985,
    [[976,433],[976,613],[946,641],[951,647],[941,668],[941,671],[951,676],[926,679],[910,702],[936,713],[951,723],[921,725],[1051,760],[1092,782],[1122,775],[1067,801],[855,853],[865,853],[883,830],[971,737],[993,741],[996,741],[1001,750],[926,732]],
    [[1240,372],[1105,728],[1039,746],[1112,754],[1117,765],[1218,775],[1152,775],[1198,793],[1177,795],[1131,788],[1145,804],[1127,798],[1097,779],[1087,793],[1090,795],[1082,810],[1083,811],[1218,815],[1195,830],[1278,822],[1338,820],[1072,825],[1095,828],[1122,823],[1117,838],[1137,845],[1136,844],[1112,853],[1112,847],[1097,848],[1077,853],[1076,851],[1092,840],[1026,767],[1051,778],[1026,803],[1026,804],[996,774],[1057,853],[875,854],[880,855],[885,854],[890,855],[882,852]],
    [['red',200,952,24,782,26,725,857],['red',140,960,30,810,24,740,857],['red',45,1020,18,845,10,790,857],['blue',75,925,15,829,10,795,857],['blue',30,965,32,802,22,760,855],['blue',65,990,34,848,8,820,857],['blue',22,1040,10,840,14,790,857]])]
];
document.getElementById('cards').innerHTML = cards.map(([title, chart]) =>
  `<article class="card"><header class="card-head"><h3>${title}</h3><svg class="card-icon"><use href="#expand"/></svg><svg class="card-icon"><use href="#close"/></svg></header><svg class="card-chart">${chart}</svg></article>`).join('');

/* Stacked concentration chart. */
(function () {
  const left = 107.6, right = 845, base = 514.3, top = 46;
  const y = v => base - (1372 - v) / 2.34;
  const xs = i => left + (55 + i * 105.73) / 1.7231;
  let s = '';
  [290, 507, 723, 939, 1155].forEach(v => { s += line(left, y(v), right, y(v), `class="grid-line"`); });
  [0, 2, 4, 6, 8, 10].forEach(i => { s += line(xs(i), top, xs(i), base, 'class="grid-line"'); });
  s += rect(692, top - 2, 155, 134, 'fill="#fff"');
  const bars = [
    [[642,710,741,879,1281], [[614,668],[701,718],[682,797],[785,972],[1262,1300]]],
    [[838,879,900,998,1307], [[826,851],[873,886],[867,930],[925,1069],[1295,1317]]],
    [[803,853,879,975,1288], [[792,818],[844,860],[848,909],[917,1031],[1267,1310]]],
    [[922,956,972,1038,1304], [[914,931],[952,961],[954,993],[975,1101],[1293,1315]]],
    [[812,858,881,961,1293], [[804,824],[851,865],[860,902],[910,1012],[1274,1309]]],
    [[899,932,951,1019,1307], [[891,908],[926,939],[932,972],[951,1087],[1295,1317]]],
    [[922,961,979,1038,1307], [[911,937],[952,967],[956,1003],[984,1089],[1293,1323]]],
    [[918,944,961,1012,1312], [[914,925],[939,951],[933,979],[931,1092],[1298,1325]]],
    [[976,1003,1019,1066,1298], [[970,986],[999,1006],[1000,1036],[1036,1127],[1281,1316]]],
    [[1018,1040,1054,1106,1321], [[1015,1023],[1036,1044],[1038,1071],[1050,1164],[1319,1325]]],
    [[948,975,996,1063,1302], [[931,965],[975,987],[946,1047],[961,1166],[1291,1312]]],
    [[null,1073,null,1089,1312], [null,[1068,1078],null,[1021,1157],[1305,1316]]]
  ];
  bars.forEach(([e, r], i) => { s += stack(xs(i), 43, e, 1372, r, y, 3.5, 1.2); });
  s += line(left, base, right, base, 'class="axis-line axis-main"') + line(left, top, left, base, 'class="axis-line axis-main"');
  [2500, 2000, 1500, 1000, 500, 0].forEach(v => {
    s += text(left - 4, base - v * .1848 + 5.5, 'tick', v, 0, 'text-anchor="end"');
  });
  [0, 2, 4, 6, 8, 10].forEach(i => { s += text(xs(i), base + 21.5, 'tick', 2004 + i, 0, 'text-anchor="middle"'); });
  s += text(453, base + 59, 'axis-title', 'Year', 49);
  s += text(0, 0, 'axis-title', 'conc (ng/g wet)', 179, 'transform="translate(51 370) rotate(-90)"');
  [['Pesticides', 'pesticides', 74], ['Major PBDEs', 'pbdes', 96], ['Total DDTs', 'ddts', 80], ['Total PCBs', 'pcbs', 79], ['Mercury', 'mercury', 60]].forEach(([n, k, len], i) => {
    const cy = 64.2 + i * 23.8;
    s += rect(709.5, cy - 7.5, 16, 15, `fill="rgb(${C[k]})" fill-opacity=".5" stroke="rgb(${C[k]})" stroke-opacity=".6" stroke-width="1.3"`);
    s += text(743, cy + 5.2, 'legend', n, len);
  });
  document.getElementById('concentration').innerHTML = s;
})();

/* Lake map. */
(function () {
  const X = x => (x / 1.7422 - 12).toFixed(1), Y = y => (y / 2.3403 - 72).toFixed(1);
  let s = `<g class="lakes" filter="url(#relief)"><g transform="translate(-12 -72) scale(${1 / 1.7422} ${1 / 2.3403})"><use href="#lakes"/></g></g>`;
  [['Lake Superior', 400, 458, 85], ['Lake Michigan', 510, 851, 90], ['Lake Huron', 827, 982, 71], ['Lake Ontario', 1205, 1130, 79], ['Lake Erie', 936, 1342, 57]]
    .forEach(([n, x, y, l]) => { s += text(X(x), Y(y), 'lake-name', n, l); });
  const G = '#1fc988', R = '#ef3b0e';
  [['Oswego', 1377, 1134, 110, G], ['North Hamlin', 1255, 1158, 175, R], ['Keweenaw Point', 467, 525, 217, G], ['Apostle Islands', 217, 596, 202, R],
   ['Sturgeon Bay', 485, 901, 175, G], ['Rockport', 813, 901, 119, G], ['Port Austin', 855, 1055, 145, R], ['Saugatuck', 564, 1288, 140, R],
   ['Dunkirk', 1129, 1288, 101, G], ['Middle Bass Island', 862, 1420, 247, R]].forEach(([n, x, y, w, c]) => {
    s += dot(X(x), Y(y), 12.7, `fill="${c}"`);
    s += rect(X(x + 30), Y(y - 29), w / 1.7422, 20.6, 'fill="#000" fill-opacity=".5"');
    s += text(X(x + 31), Y(y + 9), 'site-name', n, w / 1.7422 - 1);
  });
  [['Less Industrial Sites', 326, 150, G], ['More Industrial Sites', 408, 153, R]].forEach(([n, y, l, c]) => {
    s += dot(X(1034), Y(y), 7.2, `fill="${c}"`) + text(X(1065), Y(y + 11), 'map-legend', n, l);
  });
  document.getElementById('map').innerHTML = s;
})();
```
